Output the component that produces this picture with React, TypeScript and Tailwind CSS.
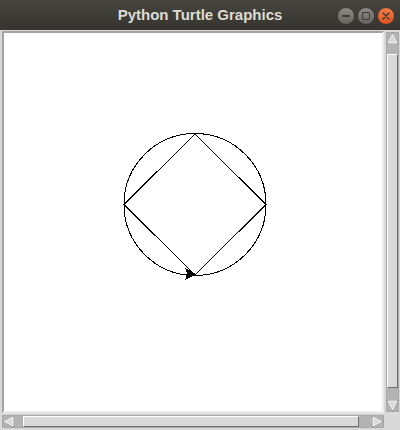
import React from 'react';

// Tk-style arrow for scrollbars
function Arrow({ dir }: { dir: 'up' | 'down' | 'left' | 'right' }) {
  const pts: Record<string, string> = {
    up: '5.5,1 10,10 1,10',
    down: '1,1 10,1 5.5,10',
    left: '1,5.5 10,1 10,10',
    right: '10,5.5 1,1 1,10',
  };
  return (
    <svg width="11" height="11" viewBox="0 0 11 11" className="block shrink-0">
      <polygon points={pts[dir]} fill="#d9d9d9" stroke="#8c8c8c" strokeWidth="1.6" />
      <polygon points={pts[dir]} fill="#d9d9d9" stroke="#ffffff" strokeWidth="0.9" />
    </svg>
  );
}

function TitleBar() {
  return (
    <div className="grid h-[30px] grid-cols-[1fr_auto_1fr] items-center bg-gradient-to-b from-[#46453f] to-[#35342f]">
      <div />
      <span className="text-[15px] font-bold text-[#dfdbd2] [font-family:'Liberation_Sans',Arial,sans-serif]">
        Python Turtle Graphics
      </span>
      <div className="flex items-center justify-end gap-[2px] pr-[5px] pt-[1px]">
        {/* minimize */}
        <div className="flex h-[18px] w-[18px] items-center justify-center rounded-full border border-[#3a3935] bg-gradient-to-b from-[#8b8a85] to-[#66655f]">
          <div className="h-[2px] w-[8px] rounded bg-[#3c3b37]" />
        </div>
        {/* maximize */}
        <div className="flex h-[18px] w-[18px] items-center justify-center rounded-full border border-[#3a3935] bg-gradient-to-b from-[#8b8a85] to-[#66655f]">
          <div className="h-[8px] w-[8px] rounded-[1px] border-[1.5px] border-[#3c3b37]" />
        </div>
        {/* close */}
        <div className="flex h-[18px] w-[18px] items-center justify-center rounded-full border border-[#3a3935] bg-gradient-to-b from-[#f47b4a] to-[#e2521d]">
          <svg width="8" height="8" viewBox="0 0 8 8">
            <path d="M1 1L7 7M7 1L1 7" stroke="#3c3b37" strokeWidth="1.4" strokeLinecap="round" />
          </svg>
        </div>
      </div>
    </div>
  );
}

export default function App() {
  return (
    <div className="flex h-[430px] w-[400px] flex-col overflow-hidden bg-[#d9d9d9]">
      <TitleBar />

      <div className="flex flex-col pl-[2px] pt-[1px]">
        <div className="flex gap-[2px]">
          {/* turtle canvas */}
          <div className="h-[382px] w-[382px] border-2 border-b-[#ececec] border-l-[#a3a3a3] border-r-[#ececec] border-t-[#a3a3a3] bg-white">
            <svg width="378" height="378" viewBox="0 0 378 378" className="block" shapeRendering="crispEdges">
              <circle cx="191" cy="171.5" r="71" fill="none" stroke="#000" strokeWidth="1" />
              <polygon points="191,101 262,171.5 191,242 120,171.5" fill="none" stroke="#000" strokeWidth="1" />
              <polygon points="191,241 182,236 184,241 182,246" fill="#000" stroke="#000" strokeWidth="1" />
            </svg>
          </div>

          {/* vertical scrollbar */}
          <div className="mt-[1px] flex h-[380px] w-[13px] flex-col items-center border border-[#a8a8a8] bg-[#b3b3b3]">
            <div className="flex h-[11px] w-full items-center justify-center">
              <Arrow dir="up" />
            </div>
            <div className="h-[10px]" />
            <div className="h-[334px] w-full border border-b-[#6e6e6e] border-l-[#ffffff] border-r-[#6e6e6e] border-t-[#ffffff] bg-[#d9d9d9]" />
            <div className="flex-1" />
            <div className="flex h-[11px] w-full items-center justify-center">
              <Arrow dir="down" />
            </div>
          </div>
        </div>

        {/* horizontal scrollbar */}
        <div className="mt-[2px] flex h-[13px] w-[382px] items-center border border-[#a8a8a8] bg-[#b3b3b3]">
          <div className="flex h-full w-[11px] items-center justify-center">
            <Arrow dir="left" />
          </div>
          <div className="w-[9px]" />
          <div className="h-full w-[336px] border border-b-[#6e6e6e] border-l-[#ffffff] border-r-[#6e6e6e] border-t-[#ffffff] bg-[#d9d9d9]" />
          <div className="flex-1" />
          <div className="flex h-full w-[11px] items-center justify-center">
            <Arrow dir="right" />
          </div>
        </div>
      </div>
    </div>
  );
}
